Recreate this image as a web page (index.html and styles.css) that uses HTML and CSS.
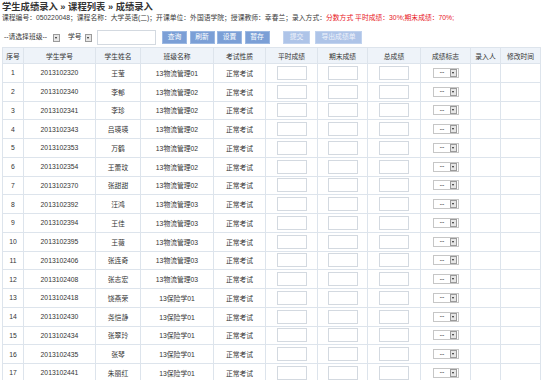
FILE: index.html
```html
<!DOCTYPE html>
<html lang="zh-CN">
<head>
    <meta charset="UTF-8">
    <title>成绩录入</title>
    <link rel="stylesheet" href="styles.css">
</head>
<body>
    <h1 class="crumb">学生成绩录入 » 课程列表 » 成绩录入</h1>
    <p class="info">课程编号：050220048；课程名称：大学英语(二)；开课单位：外国语学院；授课教师：幸春兰；录入方式：<span class="red">分数方式 平时成绩：30%;期末成绩：70%;</span></p>

    <div class="toolbar">
        <span class="sel sel-class"><span class="sel-text">--请选择班级--</span><span class="sel-btn"></span></span>
        <span class="sel sel-field"><span class="sel-text">学号</span><span class="sel-btn"></span></span>
        <input type="text" class="search">
        <button class="btn first">查询</button>
        <button class="btn">刷新</button>
        <button class="btn">设置</button>
        <button class="btn">暂存</button>
        <button class="btn off submit">提交</button>
        <button class="btn off export">导出成绩单</button>
    </div>

    <table class="grid">
        <colgroup>
            <col style="width:21px"><col style="width:72px"><col style="width:45px"><col style="width:73px">
            <col style="width:52px"><col style="width:52px"><col style="width:50px"><col style="width:53px">
            <col style="width:50px"><col style="width:30px"><col style="width:40px">
        </colgroup>
        <thead>
            <tr>
                <th>序号</th><th>学生学号</th><th>学生姓名</th><th>班级名称</th><th>考试性质</th>
                <th>平时成绩</th><th>期末成绩</th><th>总成绩</th><th>成绩标志</th><th>录入人</th><th>修改时间</th>
            </tr>
        </thead>
        <tbody id="rows"></tbody>
    </table>

    <script>
        const students = [
            ['2013102320', '王莹', '13物流管理01'],
            ['2013102340', '李郁', '13物流管理02'],
            ['2013102341', '李珍', '13物流管理02'],
            ['2013102343', '吕瑛瑛', '13物流管理02'],
            ['2013102353', '万鹤', '13物流管理02'],
            ['2013102354', '王蕾玟', '13物流管理02'],
            ['2013102370', '张甜甜', '13物流管理02'],
            ['2013102392', '汪鸿', '13物流管理03'],
            ['2013102394', '王佳', '13物流管理03'],
            ['2013102395', '王薇', '13物流管理03'],
            ['2013102406', '张连奇', '13物流管理03'],
            ['2013102408', '张志宏', '13物流管理03'],
            ['2013102418', '饶燕荣', '13保险学01'],
            ['2013102430', '尧恺静', '13保险学01'],
            ['2013102434', '张翠玲', '13保险学01'],
            ['2013102435', '张琴', '13保险学01'],
            ['2013102441', '朱丽红', '13保险学01']
        ];
        const tbody = document.getElementById('rows');
        students.forEach((s, i) => {
            const tr = document.createElement('tr');
            tr.innerHTML =
                `<td>${i + 1}</td><td>${s[0]}</td><td>${s[1]}</td><td>${s[2]}</td><td>正常考试</td>` +
                `<td><input type="text" class="score"></td>` +
                `<td><input type="text" class="score"></td>` +
                `<td><input type="text" class="score"></td>` +
                `<td><span class="sel sel-flag"><span class="sel-text">--</span><span class="sel-btn"></span></span></td>` +
                `<td></td><td></td>`;
            tbody.appendChild(tr);
        });
    </script>
</body>
</html>
```

FILE: styles.css
```css
body {
    margin: 0;
    padding: 0 2px;
    background: #fff;
    color: #333;
    font-family: "Liberation Sans", "Noto Sans CJK SC", sans-serif;
    font-size: 6.8px;
}
.crumb {
    margin: 0;
    padding-top: 2px;
    font-size: 9.3px;
    line-height: 11px;
    font-weight: bold;
    color: #333;
}
.info {
    margin: 0;
    line-height: 9px;
    color: #3a3a3a;
}
.red {
    color: #e8141c;
}

.toolbar {
    display: flex;
    align-items: center;
    height: 15px;
    margin-top: 8px;
}
.sel {
    display: inline-flex;
    align-items: center;
    box-sizing: border-box;
    border: 1px solid #d4d4d4;
    background: #fff;
}
.sel-text {
    flex: 1;
    padding-left: 1px;
    white-space: nowrap;
    line-height: 1;
}
.sel-btn {
    position: relative;
    box-sizing: border-box;
    width: 7px;
    height: 8px;
    margin-right: 1px;
    border: 1px solid #9a9a9a;
    background: #e6e6e6;
}
.sel-btn::after {
    content: "";
    position: absolute;
    left: 1px;
    top: 2px;
    border-left: 1.5px solid transparent;
    border-right: 1.5px solid transparent;
    border-top: 2px solid #222;
}
.sel-class {
    width: 60px;
    height: 12px;
    border-color: #fff;
}
.sel-field {
    width: 28px;
    height: 12px;
    margin-left: 4px;
    border-color: #fff;
}
.search {
    box-sizing: border-box;
    width: 59px;
    height: 15px;
    margin: 0 0 0 3px;
    padding: 0;
    border: 1px solid #d3d9e0;
}
.btn {
    width: 25px;
    height: 13px;
    margin: 0 0 0 2.5px;
    padding: 0;
    border: 1px solid #9bb8e2;
    background: #7b9fd6;
    color: #fff;
    font-family: inherit;
    font-size: 6.8px;
    line-height: 1;
}
.btn.first {
    margin-left: 6px;
}
.btn.off {
    border-color: #c0d2ee;
    background: #aec4e8;
    color: #eef3fb;
}
.btn.submit {
    width: 27px;
    margin-left: 13.5px;
}
.btn.export {
    width: 47px;
    margin-left: 5px;
}

.grid {
    width: 538px;
    margin-top: 2px;
    border-collapse: collapse;
    table-layout: fixed;
}
.grid th,
.grid td {
    padding: 0;
    border: 1px solid #dde4ec;
    text-align: center;
    font-weight: normal;
    white-space: nowrap;
    overflow: hidden;
}
.grid th {
    height: 15px;
    background: #eef3f9;
}
.grid td {
    height: 17.75px;
}
.score {
    box-sizing: border-box;
    display: block;
    width: 30px;
    height: 14px;
    margin: 0 auto;
    padding: 0;
    border: 1px solid #d3d9e0;
}
.sel-flag {
    width: 26px;
    height: 10px;
    border-color: #c6c6c6;
    vertical-align: middle;
}
```
